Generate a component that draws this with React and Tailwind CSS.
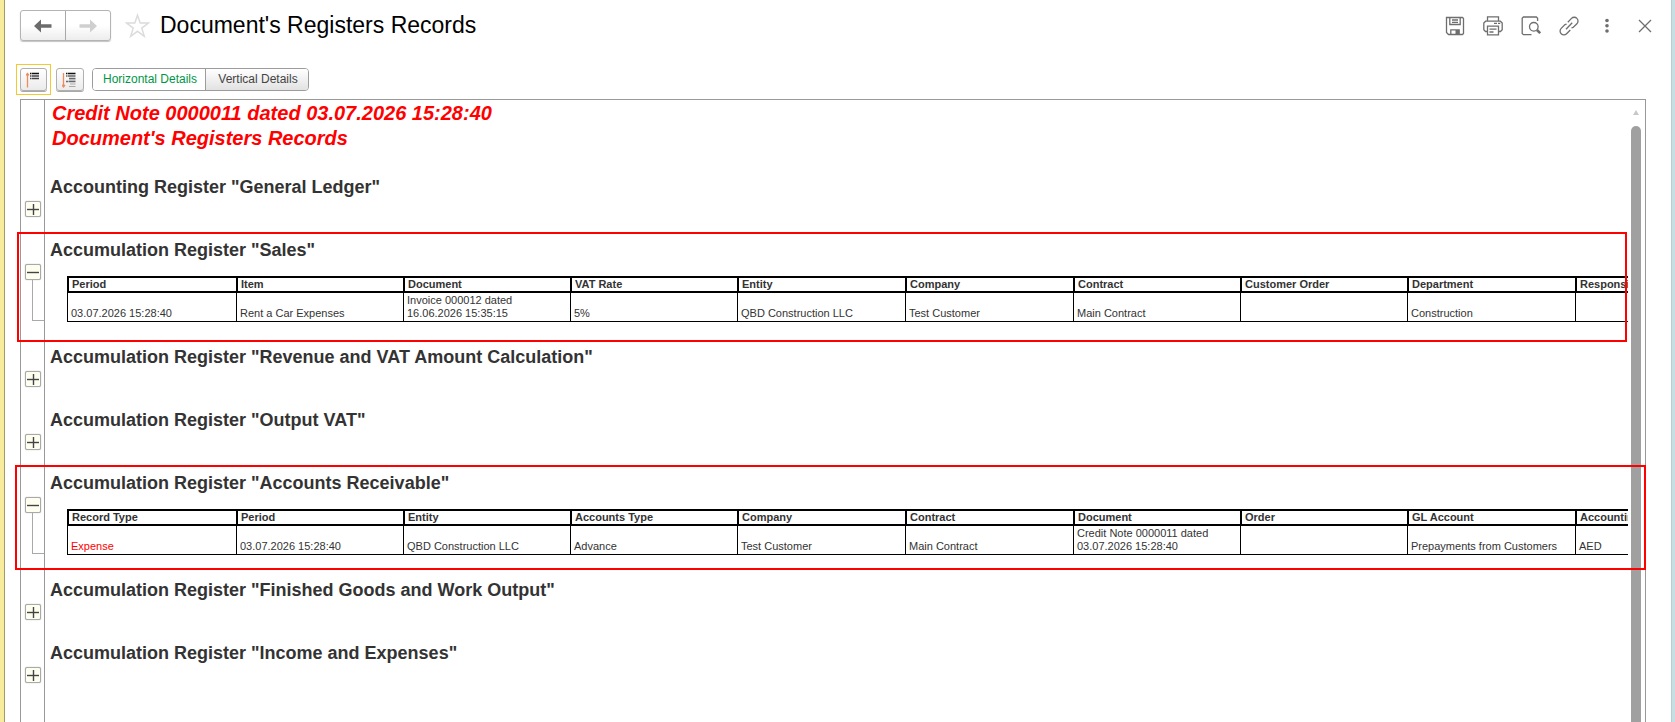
import React, { useState } from "react";
import clsx from "clsx";

const columnWidths = [169, 167, 167, 167, 168, 168, 167, 167, 168, 167];

const registers = [
  { id: "ledger", title: 'Accounting Register "General Ledger"' },
  {
    id: "sales",
    title: 'Accumulation Register "Sales"',
    open: true,
    frame: "-top-[5px] bottom-0.5 -left-1 right-px",
    columns: [
      "Period",
      "Item",
      "Document",
      "VAT Rate",
      "Entity",
      "Company",
      "Contract",
      "Customer Order",
      "Department",
      "Responsible",
    ],
    row: [
      "03.07.2026 15:28:40",
      "Rent a Car Expenses",
      "Invoice 000012 dated 16.06.2026 15:35:15",
      "5%",
      "QBD Construction LLC",
      "Test Customer",
      "Main Contract",
      "",
      "Construction",
      "",
    ],
  },
  {
    id: "revenue",
    title: 'Accumulation Register "Revenue and VAT Amount Calculation"',
  },
  { id: "vat", title: 'Accumulation Register "Output VAT"' },
  {
    id: "receivable",
    title: 'Accumulation Register "Accounts Receivable"',
    open: true,
    frame: "-top-[5px] bottom-[7px] -left-1.5 -right-[18px]",
    columns: [
      "Record Type",
      "Period",
      "Entity",
      "Accounts Type",
      "Company",
      "Contract",
      "Document",
      "Order",
      "GL Account",
      "Accounting Currency",
    ],
    row: [
      "Expense",
      "03.07.2026 15:28:40",
      "QBD Construction LLC",
      "Advance",
      "Test Customer",
      "Main Contract",
      "Credit Note 0000011 dated 03.07.2026 15:28:40",
      "",
      "Prepayments from Customers",
      "AED",
    ],
  },
  {
    id: "goods",
    title: 'Accumulation Register "Finished Goods and Work Output"',
  },
  { id: "income", title: 'Accumulation Register "Income and Expenses"' },
];

const Arrow = ({ flip, color }) => (
  <svg width="18" height="14" viewBox="0 0 18 14" fill={color}>
    <path
      d="M0 7 L7 0.5 V5.3 H17.5 V8.7 H7 V13.5 Z"
      transform={flip ? "rotate(180 9 7)" : undefined}
    />
  </svg>
);

const headerIcons = [
  {
    label: "Save",
    icon: (
      <>
        <path d="M1.5 1.5h16l1 1v15l-1 1h-14l-2-2z" />
        <path d="M4.8 1.5v7h10.4v-7M7 4h6M7 6.3h6" />
        <path d="M5.8 18.5v-4.7h8.4v4.7" />
        <path d="M10.5 14h3.5v4.5h-3.5z" fill="currentColor" stroke="none" />
      </>
    ),
  },
  {
    label: "Print",
    icon: (
      <>
        <path d="M4.5 5V.8h11V5M4.5 15.5h-2l-1.7-1.7V7L2.6 5.2h14.8L19.2 7v6.8l-1.7 1.7h-2" />
        <path d="M4.5 10.2h11v8.6h-11zM6.5 13.2h7M6.5 16h4M11 7.3h3M15 7.3h2.2" />
      </>
    ),
  },
  {
    label: "Preview",
    icon: (
      <>
        <path d="M10.5 18.6H2.4L1.2 17.4V2.2L2.4 1h13l1.2 1.2V5" />
        <circle cx="12.8" cy="10.8" r="4.3" />
        <path d="M16 14l3.2 3.2" strokeWidth="2.6" />
      </>
    ),
  },
  {
    label: "Get link",
    icon: (
      <>
        <path d="M7 13.2l6.2-6.4" />
        <path d="M8.8 6.2l3.7-3.8a3.7 3.7 0 0 1 5.4 0 3.8 3.8 0 0 1 0 5.4l-3.8 3.7-1.6.4" />
        <path d="M7.6 8.2l-1.6.4-3.8 3.8a3.8 3.8 0 0 0 0 5.4 3.8 3.8 0 0 0 5.4 0l3.7-3.8" />
      </>
    ),
  },
  {
    label: "More actions",
    icon: (
      <g fill="currentColor" stroke="none">
        <circle cx="10" cy="4.5" r="1.8" />
        <circle cx="10" cy="9.8" r="1.8" />
        <circle cx="10" cy="15" r="1.8" />
      </g>
    ),
  },
  { label: "Close", icon: <path d="M4 4l12 12M16 4L4 16" /> },
];

const Header = () => (
  <header className="flex items-center justify-between pt-2.5 pr-[7px]">
    <div className="flex items-center">
      <div className="flex h-[31px] w-[91px] rounded-[3px] border border-[#b4b4b4] bg-linear-to-b from-white from-50% to-[#ededed] shadow-[0_1px_1px_#c4c4c4]">
        <button
          type="button"
          aria-label="Back"
          className="flex flex-1 items-center justify-center border-r border-[#a8a8a8]"
        >
          <Arrow color="#6b6b6b" />
        </button>
        <button
          type="button"
          aria-label="Forward"
          className="flex flex-1 items-center justify-center"
        >
          <Arrow flip color="#cfcfcf" />
        </button>
      </div>
      <button type="button" aria-label="Add to favorites" className="ml-3.5">
        <svg
          width="25"
          height="26"
          viewBox="0 0 25 26"
          fill="none"
          stroke="#dcdcdc"
          strokeWidth="1.5"
        >
          <path d="M12.5 2.2l2.7 7.9h8.2l-6.6 5 2.5 8.2-6.8-5-6.8 5 2.5-8.2-6.6-5h8.2z" />
        </svg>
      </button>
      <h1 className="ml-2.5 pb-0.5 text-[23px] leading-7 text-black">
        Document's Registers Records
      </h1>
    </div>
    <div className="flex text-[#6e6e6e]">
      {headerIcons.map(({ label, icon }) => (
        <button
          key={label}
          type="button"
          aria-label={label}
          className="flex w-[38px] justify-center"
        >
          <svg
            width="20"
            height="20"
            viewBox="0 0 20 20"
            fill="none"
            stroke="currentColor"
            strokeWidth="1.3"
          >
            {icon}
          </svg>
        </button>
      ))}
    </div>
  </header>
);

const toolButton =
  "flex h-[23px] items-center justify-center rounded-[3px] border border-[#b0b0b0] bg-linear-to-b from-white to-[#ebebeb] shadow-[0_1px_0_#a8a8a8]";

const Toolbar = () => {
  const [view, setView] = useState("horizontal");

  return (
    <div className="-ml-1 flex items-center pt-[23px]">
      <div className="border border-[#f5c92d] p-[3px]">
        <button
          type="button"
          aria-label="Collapse all"
          className={clsx(toolButton, "w-[27px]")}
        >
          <svg width="15" height="16" viewBox="0 0 15 16" fill="none">
            <path
              d="M1.5 15.5V1.5M0 3.4l1.5-1.9L3 3.4"
              stroke="#f08a5c"
              strokeWidth="1.3"
            />
            <path d="M4 1.5h1.5M6 1.5h7" stroke="#111" strokeWidth="1.5" />
            <path
              d="M4 4h1.5M6 4h7M4 6.5h1.5M6 6.5h7"
              stroke="#444"
              strokeWidth="1.4"
            />
          </svg>
        </button>
      </div>
      <button
        type="button"
        aria-label="Expand all"
        className={clsx(toolButton, "ml-[5px] w-7")}
      >
        <svg width="16" height="16" viewBox="0 0 16 16" fill="none">
          <path
            d="M1.5 1v14M0 13l1.5 1.9L3 13"
            stroke="#f08a5c"
            strokeWidth="1.3"
          />
          <path d="M4 1.5h1.5M6 1.5h7.5" stroke="#111" strokeWidth="1.5" />
          <path
            d="M4 4h1.5M6 4h7.5M7 6.5h6.5M4 9.5h2.5M7 9.5h6.5"
            stroke="#666"
            strokeWidth="1.4"
          />
          <path d="M7 8h6.5M8 12h5.5M7 14.5h6.5" stroke="#aaa" />
        </svg>
      </button>
      <div className="ml-2 flex h-[23px] overflow-hidden rounded-[4px] border border-[#9c9c9c] text-xs">
        <button
          type="button"
          onClick={() => setView("horizontal")}
          className={clsx(
            "w-[113px] border-r border-[#9c9c9c] pb-0.5 pl-0.5",
            view === "horizontal"
              ? "bg-white text-[#009646]"
              : "bg-linear-to-b from-white to-[#e2e2e2] text-[#444]"
          )}
        >
          Horizontal Details
        </button>
        <button
          type="button"
          onClick={() => setView("vertical")}
          className={clsx(
            "w-[102px] pb-0.5 pl-0.5",
            view === "vertical"
              ? "bg-white text-[#009646]"
              : "bg-linear-to-b from-white to-[#e2e2e2] text-[#444]"
          )}
        >
          Vertical Details
        </button>
      </div>
    </div>
  );
};

const RecordsTable = ({ columns, row }) => (
  <table className="mt-3.5 ml-[22px] w-[1675px] table-fixed border-separate border-spacing-0 text-[11px] text-[#333]">
    <colgroup>
      {columnWidths.map((width, i) => (
        <col key={i} style={{ width }} />
      ))}
    </colgroup>
    <thead>
      <tr>
        {columns.map((column) => (
          <th
            key={column}
            className="h-[17px] overflow-hidden border-y-2 border-l-2 border-black p-0 pl-[3px] text-left leading-[13px] whitespace-nowrap"
          >
            {column}
          </th>
        ))}
      </tr>
    </thead>
    <tbody>
      <tr>
        {row.map((value, i) => (
          <td
            key={i}
            className={clsx(
              "h-[29px] border-b border-l border-black p-0 pr-6 pb-px pl-[3px] align-bottom leading-[13px]",
              value === "Expense" && "text-[#ff0000]",
              value.length < 30 && "whitespace-nowrap"
            )}
          >
            {value}
          </td>
        ))}
      </tr>
    </tbody>
  </table>
);

const Register = ({ register }) => {
  const [open, setOpen] = useState(Boolean(register.open));

  return (
    <section
      className={clsx("relative flex", open ? "h-[107px]" : "h-[63px]")}
    >
      <div className="flex w-6 shrink-0 flex-col items-center border-r border-[#999] pt-[27px]">
        <button
          type="button"
          aria-label={register.title}
          aria-expanded={open}
          onClick={() => setOpen(!open)}
          className="size-4 shrink-0 rounded-[2px] border border-[#a9a9a9] bg-[#fffff0] shadow-[0_0_1px_#999]"
        >
          <svg width="14" height="14" viewBox="0 0 14 14" stroke="#444">
            <path d="M1 7.5h12" strokeWidth="1.4" />
            {!open && <path d="M7.5 2v11" strokeWidth="1.4" />}
          </svg>
        </button>
        {open && (
          <div className="h-[41px] w-3 self-end border-b border-l border-[#a9a9a9]" />
        )}
      </div>
      <div className="min-w-0 flex-1 overflow-hidden">
        <h2 className="pt-px pl-[5px] text-lg leading-6 font-bold whitespace-nowrap text-[#333]">
          {register.title}
        </h2>
        {open && <RecordsTable columns={register.columns} row={register.row} />}
      </div>
      {register.frame && (
        <div
          className={clsx(
            "pointer-events-none absolute z-10 border-2 border-[#ff0000]",
            register.frame
          )}
        />
      )}
    </section>
  );
};

const App = () => {
  return (
    <div className="flex min-h-screen border-l-4 border-[#f9eb9c] bg-white font-['Liberation_Sans',Arial,sans-serif]">
      <main className="flex min-w-0 flex-1 flex-col border-l border-[#a39a6a] pl-[15px]">
        <Header />
        <Toolbar />
        <div className="mt-1 mr-[25px] flex flex-1 border border-b-0 border-[#999]">
          <div className="flex min-w-0 flex-1 flex-col">
            <div className="flex h-[74px]">
              <div className="w-6 shrink-0 border-r border-[#999]" />
              <div className="pt-px pl-[7px] text-xl leading-[25px] font-bold whitespace-nowrap text-[#ff0000] italic">
                <p>Credit Note 0000011 dated 03.07.2026 15:28:40</p>
                <p>Document's Registers Records</p>
              </div>
            </div>
            {registers.map((register) => (
              <Register key={register.id} register={register} />
            ))}
            <div className="w-6 flex-1 border-r border-[#999]" />
          </div>
          <div className="flex w-[17px] shrink-0 flex-col items-start pt-2.5 pl-[3px]">
            <svg
              className="ml-0.5"
              width="6"
              height="5"
              viewBox="0 0 6 5"
              fill="#c8c8c8"
            >
              <path d="M3 0l3 5H0z" />
            </svg>
            <div className="mt-[11px] w-2.5 flex-1 rounded-t-[5px] bg-[#a0a0a0]" />
          </div>
        </div>
      </main>
      <div className="w-1 border-l border-[#b5cfd3] bg-[#c5dfe2]" />
    </div>
  );
};

export default App;
